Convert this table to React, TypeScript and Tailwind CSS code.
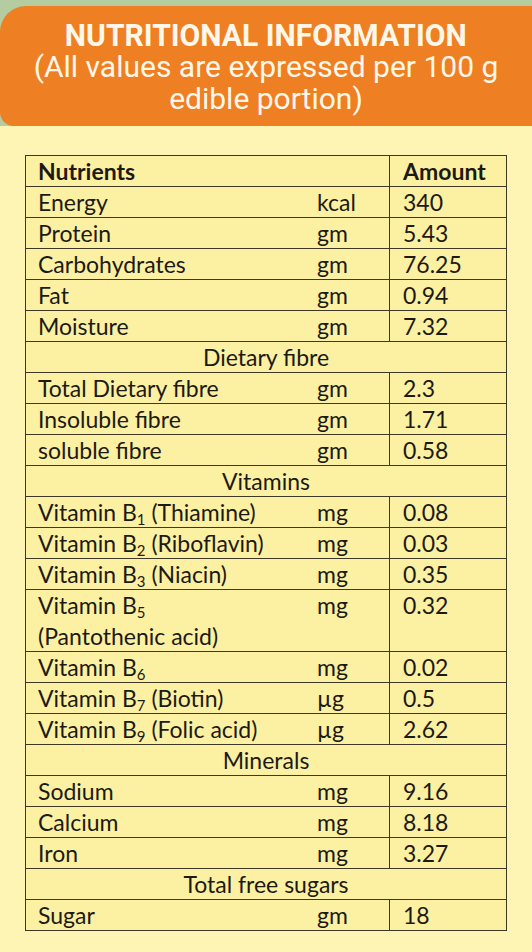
import type { ReactNode } from "react";

type Row =
    | { kind: "head" }
    | { kind: "section"; label: string }
    | { kind: "item"; name: ReactNode; unit: string; amount: string; tall?: boolean };

const B = ({ n }: { n: string }): JSX.Element => (
    <>
        B<sub className="text-[15px]">{n}</sub>
    </>
);

const rows: Row[] = [
    { kind: "head" },
    { kind: "item", name: "Energy", unit: "kcal", amount: "340" },
    { kind: "item", name: "Protein", unit: "gm", amount: "5.43" },
    { kind: "item", name: "Carbohydrates", unit: "gm", amount: "76.25" },
    { kind: "item", name: "Fat", unit: "gm", amount: "0.94" },
    { kind: "item", name: "Moisture", unit: "gm", amount: "7.32" },
    { kind: "section", label: "Dietary fibre" },
    { kind: "item", name: "Total Dietary fibre", unit: "gm", amount: "2.3" },
    { kind: "item", name: "Insoluble fibre", unit: "gm", amount: "1.71" },
    { kind: "item", name: "soluble fibre", unit: "gm", amount: "0.58" },
    { kind: "section", label: "Vitamins" },
    { kind: "item", name: <>Vitamin <B n="1" /> (Thiamine)</>, unit: "mg", amount: "0.08" },
    { kind: "item", name: <>Vitamin <B n="2" /> (Riboflavin)</>, unit: "mg", amount: "0.03" },
    { kind: "item", name: <>Vitamin <B n="3" /> (Niacin)</>, unit: "mg", amount: "0.35" },
    { kind: "item", name: <>Vitamin <B n="5" /><br />(Pantothenic acid)</>, unit: "mg", amount: "0.32", tall: true },
    { kind: "item", name: <>Vitamin <B n="6" /></>, unit: "mg", amount: "0.02" },
    { kind: "item", name: <>Vitamin <B n="7" /> (Biotin)</>, unit: "µg", amount: "0.5" },
    { kind: "item", name: <>Vitamin <B n="9" /> (Folic acid)</>, unit: "µg", amount: "2.62" },
    { kind: "section", label: "Minerals" },
    { kind: "item", name: "Sodium", unit: "mg", amount: "9.16" },
    { kind: "item", name: "Calcium", unit: "mg", amount: "8.18" },
    { kind: "item", name: "Iron", unit: "mg", amount: "3.27" },
    { kind: "section", label: "Total free sugars" },
    { kind: "item", name: "Sugar", unit: "gm", amount: "18" },
];

const Banner = (): JSX.Element => {
    return (
        <div className="bg-[#b4cca0] pt-[6px]">
            <div className="bg-[#ee7f22] rounded-tl-[26px] rounded-bl-[14px] h-[120px] flex flex-col items-center pt-[13px] text-[#fff8ea] font-['Roboto',sans-serif]">
                <h1 className="text-[32px] leading-[32px] font-bold scale-x-[0.94] whitespace-nowrap">NUTRITIONAL INFORMATION</h1>
                <p className="text-[30px] leading-[32px] text-center">
                    <span className="block">(All values are expressed per 100 g</span>
                    <span className="block">edible portion)</span>
                </p>
            </div>
        </div>
    );
};

const TableRow = ({ row }: { row: Row }): JSX.Element => {
    if (row.kind === "head") {
        return (
            <div className="flex h-[31px] border-b border-[#3d3826] font-bold">
                <div className="w-[364px] pl-[12px] border-r border-[#3d3826]">Nutrients</div>
                <div className="flex-1 pl-[13px]">Amount</div>
            </div>
        );
    }
    if (row.kind === "section") {
        return (
            <div className="h-[31px] border-b border-[#3d3826] text-center">{row.label}</div>
        );
    }
    return (
        <div className={row.tall ? "flex h-[62px] border-b border-[#3d3826]" : "flex h-[31px] border-b border-[#3d3826]"}>
            <div className="w-[364px] pl-[12px] border-r border-[#3d3826] flex">
                <div className="w-[279px]">{row.name}</div>
                <div>{row.unit}</div>
            </div>
            <div className="flex-1 pl-[13px]">{row.amount}</div>
        </div>
    );
};

export default function App(): JSX.Element {
    return (
        <div className="w-[532px] h-[952px] bg-[#fef5b4] overflow-hidden">
            <Banner />
            <div className="pt-[29px] px-[25px]">
                <div className="border border-b-0 border-[#3d3826] bg-[#fcf0a3] text-[#1c1a14] text-[23px] leading-[31px] font-['Lato',sans-serif] [&>div:last-child]:border-b">
                    {rows.map((row, i) => (
                        <TableRow key={i} row={row} />
                    ))}
                </div>
            </div>
        </div>
    );
}
